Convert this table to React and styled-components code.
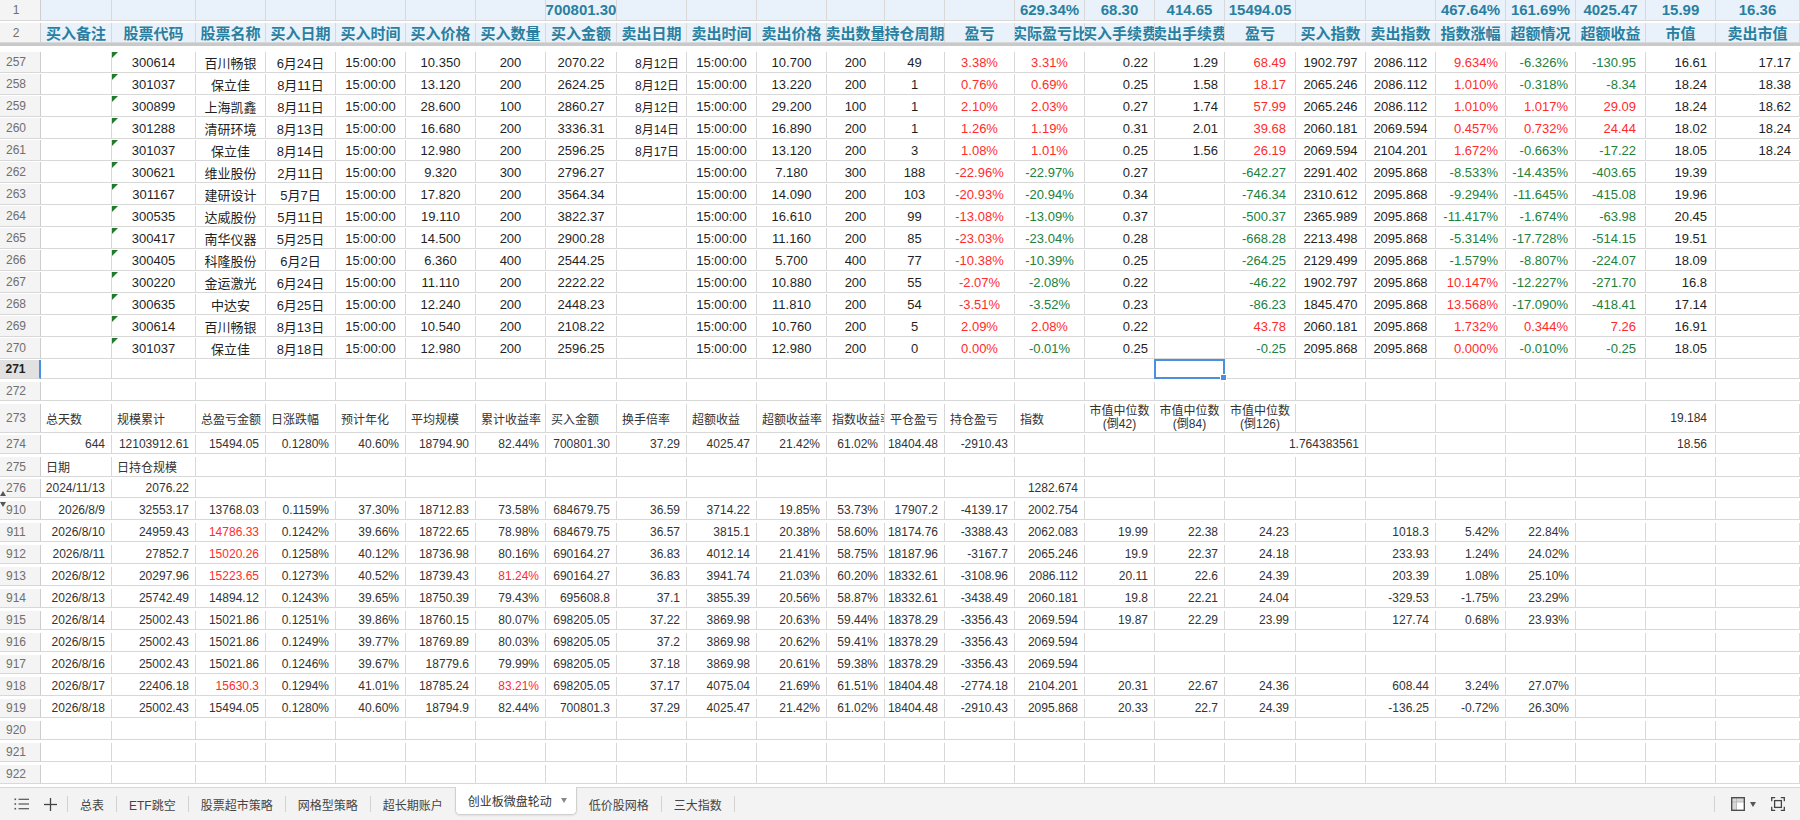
import React from "react";
import styled, { createGlobalStyle, css } from "styled-components";

const FONT = `"Liberation Sans", Arial, "Noto Sans CJK SC", sans-serif`;
const COLS = [41, 71, 84, 70, 70, 70, 70, 70, 71, 70, 70, 70, 58, 60, 70, 70, 70, 70, 71, 70, 70, 70, 70, 70, 70];
const TEMPLATE = COLS.map((w) => `${w}px`).join(" ") + " 1fr";
const GRID = "#d8d8d8";
const RED = "#ff2b2b";
const GREEN = "#23803a";
const TEAL = "#2a7fa0";
const INK = "#1f1f1f";
const JUST = { c: "center", l: "flex-start", r: "flex-end" };

const GlobalStyle = createGlobalStyle`
  html, body { margin: 0; padding: 0; background: #fff; overflow: hidden; }
  body { font-family: ${FONT}; }
`;

const Sheet = styled.div`
  width: 1800px;
  height: 820px;
  display: flex;
  flex-direction: column;
  overflow: hidden;
  background: #fff;
`;

const GridArea = styled.div`
  flex: 1 1 auto;
  min-height: 0;
  display: flex;
  flex-direction: column;
  overflow: hidden;
`;

const Row = styled.div`
  flex: none;
  display: grid;
  grid-template-columns: ${TEMPLATE};
  height: ${(p) => p.$h}px;
`;

const RowNum = styled.div`
  position: relative;
  box-sizing: border-box;
  display: flex;
  align-items: center;
  justify-content: center;
  padding-right: 8px;
  font-size: 12px;
  background: ${(p) => (p.$active ? "#e1e1e1" : "#f4f4f4")};
  color: ${(p) => (p.$active ? "#222" : "#6f6f6f")};
  font-weight: ${(p) => (p.$active ? 700 : 400)};
  border-right: ${(p) => (p.$active ? "2px solid #4b8fdf" : "1px solid #cdcdcd")};
  border-bottom: 1px solid ${GRID};
  ${(p) =>
    p.$mark === "up" &&
    css`
      &::before {
        content: "";
        position: absolute;
        left: 0;
        bottom: 1px;
        border-left: 3px solid transparent;
        border-right: 3px solid transparent;
        border-bottom: 5px solid #555;
      }
    `}
  ${(p) =>
    p.$mark === "down" &&
    css`
      &::before {
        content: "";
        position: absolute;
        left: 0;
        top: 1px;
        border-left: 3px solid transparent;
        border-right: 3px solid transparent;
        border-top: 5px solid #555;
      }
    `}
`;

const HeadCell = styled.div`
  box-sizing: border-box;
  display: flex;
  align-items: center;
  justify-content: center;
  overflow: hidden;
  white-space: nowrap;
  background: #e9f2fa;
  color: ${TEAL};
  font-weight: 700;
  font-size: 15px;
  border-right: 1px solid ${GRID};
  border-bottom: 1px solid ${GRID};
`;

const Cell = styled.div`
  position: relative;
  box-sizing: border-box;
  display: flex;
  align-items: center;
  justify-content: ${(p) => JUST[p.$align || "c"]};
  padding: 0 ${(p) => p.$pad || 0}px;
  overflow: ${(p) => (p.$spill ? "visible" : "hidden")};
  white-space: nowrap;
  font-size: ${(p) => p.$fs}px;
  color: ${(p) => p.$color};
  border-right: 1px solid ${(p) => (p.$open ? "transparent" : GRID)};
  border-bottom: 1px solid ${GRID};
  ${(p) =>
    p.$flag &&
    css`
      &::before {
        content: "";
        position: absolute;
        left: 0;
        top: 0;
        border-top: 6px solid #237a2c;
        border-right: 6px solid transparent;
      }
    `}
`;

const Stacked = styled.span`
  display: flex;
  flex-direction: column;
  align-items: center;
  line-height: 13px;
`;

const Filler = styled.div`
  background: #fff;
`;

const FreezeLine = styled.div`
  flex: none;
  height: 3px;
  background: #c9c9c9;
`;

const PartialRow = styled.div`
  flex: none;
  height: 6px;
  overflow: hidden;
  display: flex;
  flex-direction: column;
  justify-content: flex-end;
`;

const Selection = styled.div`
  position: absolute;
  left: -1px;
  top: -1px;
  right: -1px;
  bottom: -1px;
  border: 2px solid #4b8fdf;
  z-index: 3;
  &::after {
    content: "";
    position: absolute;
    right: -4px;
    bottom: -4px;
    width: 5px;
    height: 5px;
    background: #4b8fdf;
    border: 1px solid #fff;
  }
`;

/* ---------- tab bar ---------- */
const TabBar = styled.div`
  flex: none;
  height: 33px;
  box-sizing: border-box;
  border-top: 1px solid #d6d6d6;
  background: #f3f3f3;
  display: flex;
  align-items: center;
  padding-left: 14px;
  font-size: 12px;
  color: #444;
  font-family: ${FONT};
`;

const ToolIcon = styled.span`
  display: flex;
  align-items: center;
  justify-content: center;
  width: ${(p) => p.$w}px;
  margin-left: ${(p) => p.$ml || 0}px;
  margin-right: ${(p) => p.$mr || 0}px;
`;

const Sep = styled.span`
  flex: none;
  width: 1px;
  height: 16px;
  background: #d2d2d2;
`;

const Tab = styled.span`
  padding: 0 12px;
  white-space: nowrap;
`;

const ActiveTab = styled.span`
  align-self: flex-start;
  margin-top: -1px;
  height: 28px;
  box-sizing: border-box;
  padding: 0 9px 0 12px;
  display: flex;
  align-items: center;
  gap: 9px;
  white-space: nowrap;
  background: #fff;
  color: #333;
  border: 1px solid #d0d0d0;
  border-top: none;
  border-radius: 0 0 5px 5px;
  box-shadow: 0 1px 2px rgba(0, 0, 0, 0.08);
`;

const Caret = styled.span`
  width: 0;
  height: 0;
  border-left: 3.5px solid transparent;
  border-right: 3.5px solid transparent;
  border-top: 5px solid ${(p) => p.$c || "#888"};
  margin-left: ${(p) => p.$ml || 0}px;
`;

const RightTools = styled.div`
  display: flex;
  align-items: center;
  margin-left: auto;
  padding-right: 15px;
`;

/* ---------- data ---------- */
const HEAD1 = { 7: "700801.30", 14: "629.34%", 15: "68.30", 16: "414.65", 17: "15494.05", 20: "467.64%", 21: "161.69%", 22: "4025.47", 23: "15.99", 24: "16.36" };
const HEAD2 = ["买入备注", "股票代码", "股票名称", "买入日期", "买入时间", "买入价格", "买入数量", "买入金额", "卖出日期", "卖出时间", "卖出价格", "卖出数量", "持仓周期", "盈亏", "实际盈亏比", "买入手续费", "卖出手续费", "盈亏", "买入指数", "卖出指数", "指数涨幅", "超额情况", "超额收益", "市值", "卖出市值"];

const UP_COLS = [
  { a: "c" },
  { a: "c", tri: true },
  { a: "c" },
  { a: "c" },
  { a: "c" },
  { a: "c" },
  { a: "c" },
  { a: "c" },
  { a: "r", pad: 7, fs: 12 },
  { a: "c" },
  { a: "c" },
  { a: "c" },
  { a: "c" },
  { a: "c", tone: "red" },
  { a: "c", tone: "sign" },
  { a: "r", pad: 6 },
  { a: "r", pad: 6 },
  { a: "r", pad: 9, tone: "sign" },
  { a: "c" },
  { a: "c" },
  { a: "r", pad: 7, tone: "sign" },
  { a: "r", pad: 7, tone: "sign" },
  { a: "r", pad: 9, tone: "sign" },
  { a: "r", pad: 8 },
  { a: "r", pad: 8 },
];

const PARTIAL = Array.from({ length: 25 }, () => "");

const UPPER = [
  ["257", "", "300614", "百川畅银", "6月24日", "15:00:00", "10.350", "200", "2070.22", "8月12日", "15:00:00", "10.700", "200", "49", "3.38%", "3.31%", "0.22", "1.29", "68.49", "1902.797", "2086.112", "9.634%", "-6.326%", "-130.95", "16.61", "17.17"],
  ["258", "", "301037", "保立佳", "8月11日", "15:00:00", "13.120", "200", "2624.25", "8月12日", "15:00:00", "13.220", "200", "1", "0.76%", "0.69%", "0.25", "1.58", "18.17", "2065.246", "2086.112", "1.010%", "-0.318%", "-8.34", "18.24", "18.38"],
  ["259", "", "300899", "上海凯鑫", "8月11日", "15:00:00", "28.600", "100", "2860.27", "8月12日", "15:00:00", "29.200", "100", "1", "2.10%", "2.03%", "0.27", "1.74", "57.99", "2065.246", "2086.112", "1.010%", "1.017%", "29.09", "18.24", "18.62"],
  ["260", "", "301288", "清研环境", "8月13日", "15:00:00", "16.680", "200", "3336.31", "8月14日", "15:00:00", "16.890", "200", "1", "1.26%", "1.19%", "0.31", "2.01", "39.68", "2060.181", "2069.594", "0.457%", "0.732%", "24.44", "18.02", "18.24"],
  ["261", "", "301037", "保立佳", "8月14日", "15:00:00", "12.980", "200", "2596.25", "8月17日", "15:00:00", "13.120", "200", "3", "1.08%", "1.01%", "0.25", "1.56", "26.19", "2069.594", "2104.201", "1.672%", "-0.663%", "-17.22", "18.05", "18.24"],
  ["262", "", "300621", "维业股份", "2月11日", "15:00:00", "9.320", "300", "2796.27", "", "15:00:00", "7.180", "300", "188", "-22.96%", "-22.97%", "0.27", "", "-642.27", "2291.402", "2095.868", "-8.533%", "-14.435%", "-403.65", "19.39", ""],
  ["263", "", "301167", "建研设计", "5月7日", "15:00:00", "17.820", "200", "3564.34", "", "15:00:00", "14.090", "200", "103", "-20.93%", "-20.94%", "0.34", "", "-746.34", "2310.612", "2095.868", "-9.294%", "-11.645%", "-415.08", "19.96", ""],
  ["264", "", "300535", "达威股份", "5月11日", "15:00:00", "19.110", "200", "3822.37", "", "15:00:00", "16.610", "200", "99", "-13.08%", "-13.09%", "0.37", "", "-500.37", "2365.989", "2095.868", "-11.417%", "-1.674%", "-63.98", "20.45", ""],
  ["265", "", "300417", "南华仪器", "5月25日", "15:00:00", "14.500", "200", "2900.28", "", "15:00:00", "11.160", "200", "85", "-23.03%", "-23.04%", "0.28", "", "-668.28", "2213.498", "2095.868", "-5.314%", "-17.728%", "-514.15", "19.51", ""],
  ["266", "", "300405", "科隆股份", "6月2日", "15:00:00", "6.360", "400", "2544.25", "", "15:00:00", "5.700", "400", "77", "-10.38%", "-10.39%", "0.25", "", "-264.25", "2129.499", "2095.868", "-1.579%", "-8.807%", "-224.07", "18.09", ""],
  ["267", "", "300220", "金运激光", "6月24日", "15:00:00", "11.110", "200", "2222.22", "", "15:00:00", "10.880", "200", "55", "-2.07%", "-2.08%", "0.22", "", "-46.22", "1902.797", "2095.868", "10.147%", "-12.227%", "-271.70", "16.8", ""],
  ["268", "", "300635", "中达安", "6月25日", "15:00:00", "12.240", "200", "2448.23", "", "15:00:00", "11.810", "200", "54", "-3.51%", "-3.52%", "0.23", "", "-86.23", "1845.470", "2095.868", "13.568%", "-17.090%", "-418.41", "17.14", ""],
  ["269", "", "300614", "百川畅银", "8月13日", "15:00:00", "10.540", "200", "2108.22", "", "15:00:00", "10.760", "200", "5", "2.09%", "2.08%", "0.22", "", "43.78", "2060.181", "2095.868", "1.732%", "0.344%", "7.26", "16.91", ""],
  ["270", "", "301037", "保立佳", "8月18日", "15:00:00", "12.980", "200", "2596.25", "", "15:00:00", "12.980", "200", "0", "0.00%", "-0.01%", "0.25", "", "-0.25", "2095.868", "2095.868", "0.000%", "-0.010%", "-0.25", "18.05", ""],
];

const ml = (a, b) => ({ ml: [a, b] });

const LOWER = [
  { n: "271", active: true, sel: 16, vals: [] },
  { n: "272", vals: [] },
  {
    n: "273",
    h: 31,
    vals: ["总天数", "规模累计", "总盈亏金额", "日涨跌幅", "预计年化", "平均规模", "累计收益率", "买入金额", "换手倍率", "超额收益", "超额收益率", "指数收益率", "平仓盈亏", "持仓盈亏", "指数", ml("市值中位数", "(倒42)"), ml("市值中位数", "(倒84)"), ml("市值中位数", "(倒126)"), "", "", "", "", "", "19.184", ""],
  },
  {
    n: "274",
    open: [17],
    spill: [18],
    vals: ["644", "12103912.61", "15494.05", "0.1280%", "40.60%", "18794.90", "82.44%", "700801.30", "37.29", "4025.47", "21.42%", "61.02%", "18404.48", "-2910.43", "", "", "", "", "1.764383561", "", "", "", "", "18.56", ""],
  },
  { n: "275", vals: ["日期", "日持仓规模"] },
  { n: "276", mark: "up", vals: ["2024/11/13", "2076.22", "", "", "", "", "", "", "", "", "", "", "", "", "1282.674"] },
  { n: "910", mark: "down", vals: ["2026/8/9", "32553.17", "13768.03", "0.1159%", "37.30%", "18712.83", "73.58%", "684679.75", "36.59", "3714.22", "19.85%", "53.73%", "17907.2", "-4139.17", "2002.754"] },
  { n: "911", vals: ["2026/8/10", "24959.43", "!14786.33", "0.1242%", "39.66%", "18722.65", "78.98%", "684679.75", "36.57", "3815.1", "20.38%", "58.60%", "18174.76", "-3388.43", "2062.083", "19.99", "22.38", "24.23", "", "1018.3", "5.42%", "22.84%"] },
  { n: "912", vals: ["2026/8/11", "27852.7", "!15020.26", "0.1258%", "40.12%", "18736.98", "80.16%", "690164.27", "36.83", "4012.14", "21.41%", "58.75%", "18187.96", "-3167.7", "2065.246", "19.9", "22.37", "24.18", "", "233.93", "1.24%", "24.02%"] },
  { n: "913", vals: ["2026/8/12", "20297.96", "!15223.65", "0.1273%", "40.52%", "18739.43", "!81.24%", "690164.27", "36.83", "3941.74", "21.03%", "60.20%", "18332.61", "-3108.96", "2086.112", "20.11", "22.6", "24.39", "", "203.39", "1.08%", "25.10%"] },
  { n: "914", vals: ["2026/8/13", "25742.49", "14894.12", "0.1243%", "39.65%", "18750.39", "79.43%", "695608.8", "37.1", "3855.39", "20.56%", "58.87%", "18332.61", "-3438.49", "2060.181", "19.8", "22.21", "24.04", "", "-329.53", "-1.75%", "23.29%"] },
  { n: "915", vals: ["2026/8/14", "25002.43", "15021.86", "0.1251%", "39.86%", "18760.15", "80.07%", "698205.05", "37.22", "3869.98", "20.63%", "59.44%", "18378.29", "-3356.43", "2069.594", "19.87", "22.29", "23.99", "", "127.74", "0.68%", "23.93%"] },
  { n: "916", vals: ["2026/8/15", "25002.43", "15021.86", "0.1249%", "39.77%", "18769.89", "80.03%", "698205.05", "37.2", "3869.98", "20.62%", "59.41%", "18378.29", "-3356.43", "2069.594"] },
  { n: "917", vals: ["2026/8/16", "25002.43", "15021.86", "0.1246%", "39.67%", "18779.6", "79.99%", "698205.05", "37.18", "3869.98", "20.61%", "59.38%", "18378.29", "-3356.43", "2069.594"] },
  { n: "918", vals: ["2026/8/17", "22406.18", "!15630.3", "0.1294%", "41.01%", "18785.24", "!83.21%", "698205.05", "37.17", "4075.04", "21.69%", "61.51%", "18404.48", "-2774.18", "2104.201", "20.31", "22.67", "24.36", "", "608.44", "3.24%", "27.07%"] },
  { n: "919", vals: ["2026/8/18", "25002.43", "15494.05", "0.1280%", "40.60%", "18794.9", "82.44%", "700801.3", "37.29", "4025.47", "21.42%", "61.02%", "18404.48", "-2910.43", "2095.868", "20.33", "22.7", "24.39", "", "-136.25", "-0.72%", "26.30%"] },
  { n: "920", vals: [] },
  { n: "921", vals: [] },
  { n: "922", vals: [] },
];

const tone = (t, v) => {
  if (!v) return INK;
  if (t === "red") return RED;
  if (t === "sign") return v.startsWith("-") ? GREEN : RED;
  return INK;
};

const isNum = (v) => /^-?[\d.,/%]+$/.test(v);

const UpperRow = ({ vals, n }) => (
  <Row $h={22}>
    <RowNum>{n}</RowNum>
    {vals.map((v, i) => {
      const c = UP_COLS[i];
      return (
        <Cell key={i} $align={c.a} $pad={c.pad} $fs={c.fs || 13} $color={tone(c.tone, v)} $flag={!!(c.tri && v)}>
          {v}
        </Cell>
      );
    })}
    <Filler />
  </Row>
);

const LowerRow = ({ row }) => {
  const vals = Array.from({ length: 25 }, (_, i) => row.vals[i] ?? "");
  return (
    <Row $h={row.h || 22}>
      <RowNum $active={row.active} $mark={row.mark}>
        {row.n}
      </RowNum>
      {vals.map((v, i) => {
        const open = row.open && row.open.includes(i);
        const spill = row.spill && row.spill.includes(i);
        if (v && typeof v === "object") {
          return (
            <Cell key={i} $align="c" $fs={12} $color="#333">
              <Stacked>
                <span>{v.ml[0]}</span>
                <span>{v.ml[1]}</span>
              </Stacked>
            </Cell>
          );
        }
        const red = v.startsWith("!");
        const text = red ? v.slice(1) : v;
        const num = isNum(text);
        return (
          <Cell
            key={i}
            $align={num ? "r" : "l"}
            $pad={num ? (i === 23 ? 8 : 6) : 5}
            $fs={12}
            $color={red ? RED : "#333"}
            $open={open}
            $spill={spill || row.sel === i}
          >
            {text}
            {row.sel === i && <Selection />}
          </Cell>
        );
      })}
      <Filler />
    </Row>
  );
};

/* ---------- icons ---------- */
const ListIcon = () => (
  <svg width="16" height="14" viewBox="0 0 16 14">
    <g fill="#555">
      <rect x="0.5" y="1.5" width="1.6" height="1.6" />
      <rect x="0.5" y="6.2" width="1.6" height="1.6" />
      <rect x="0.5" y="10.9" width="1.6" height="1.6" />
    </g>
    <g stroke="#555" strokeWidth="1.2">
      <line x1="4.5" y1="2.3" x2="15" y2="2.3" />
      <line x1="4.5" y1="7" x2="15" y2="7" />
      <line x1="4.5" y1="11.7" x2="15" y2="11.7" />
    </g>
  </svg>
);

const PlusIcon = () => (
  <svg width="13" height="13" viewBox="0 0 13 13">
    <g stroke="#444" strokeWidth="1.3">
      <line x1="6.5" y1="0" x2="6.5" y2="13" />
      <line x1="0" y1="6.5" x2="13" y2="6.5" />
    </g>
  </svg>
);

const FreezeIcon = () => (
  <svg width="14" height="14" viewBox="0 0 14 14">
    <rect x="1" y="1" width="12" height="12" fill="#fff" />
    <rect x="1" y="1" width="4.5" height="12" fill="#d8d8d8" />
    <rect x="1" y="1" width="12" height="4" fill="#d8d8d8" />
    <line x1="5.5" y1="1" x2="5.5" y2="13" stroke="#bbb" strokeWidth="1" />
    <line x1="1" y1="5" x2="13" y2="5" stroke="#bbb" strokeWidth="1" />
    <rect x="0.7" y="0.7" width="12.6" height="12.6" fill="none" stroke="#444" strokeWidth="1.3" />
  </svg>
);

const FullIcon = () => (
  <svg width="14" height="14" viewBox="0 0 14 14">
    <g fill="none" stroke="#444" strokeWidth="1.3">
      <path d="M0.7 4.2V0.7H4.2" />
      <path d="M9.8 0.7H13.3V4.2" />
      <path d="M13.3 9.8V13.3H9.8" />
      <path d="M4.2 13.3H0.7V9.8" />
      <rect x="3.6" y="3.6" width="6.8" height="6.8" />
    </g>
  </svg>
);

export default function App() {
  return (
    <>
      <GlobalStyle />
      <Sheet>
        <GridArea>
          <Row $h={23}>
            <RowNum>1</RowNum>
            {HEAD2.map((_, i) => (
              <HeadCell key={i}>{HEAD1[i] || ""}</HeadCell>
            ))}
            <Filler />
          </Row>
          <Row $h={20}>
            <RowNum>2</RowNum>
            {HEAD2.map((h, i) => (
              <HeadCell key={i}>{h}</HeadCell>
            ))}
            <Filler />
          </Row>
          <FreezeLine />
          <PartialRow>
            <UpperRow n="" vals={PARTIAL} />
          </PartialRow>
          {UPPER.map((r) => (
            <UpperRow key={r[0]} n={r[0]} vals={r.slice(1)} />
          ))}
          {LOWER.map((r) => (
            <LowerRow key={r.n} row={r} />
          ))}
        </GridArea>
        <TabBar>
          <ToolIcon $w={16} $mr={14}>
            <ListIcon />
          </ToolIcon>
          <ToolIcon $w={13} $mr={10}>
            <PlusIcon />
          </ToolIcon>
          <Sep />
          <Tab>总表</Tab>
          <Sep />
          <Tab>ETF跳空</Tab>
          <Sep />
          <Tab>股票超市策略</Tab>
          <Sep />
          <Tab>网格型策略</Tab>
          <Sep />
          <Tab>超长期账户</Tab>
          <ActiveTab>
            创业板微盘轮动
            <Caret />
          </ActiveTab>
          <Tab>低价股网格</Tab>
          <Sep />
          <Tab>三大指数</Tab>
          <Sep />
          <RightTools>
            <Sep />
            <ToolIcon $w={14} $ml={16}>
              <FreezeIcon />
            </ToolIcon>
            <Caret $c="#555" $ml={5} />
            <ToolIcon $w={14} $ml={15}>
              <FullIcon />
            </ToolIcon>
          </RightTools>
        </TabBar>
      </Sheet>
    </>
  );
}
